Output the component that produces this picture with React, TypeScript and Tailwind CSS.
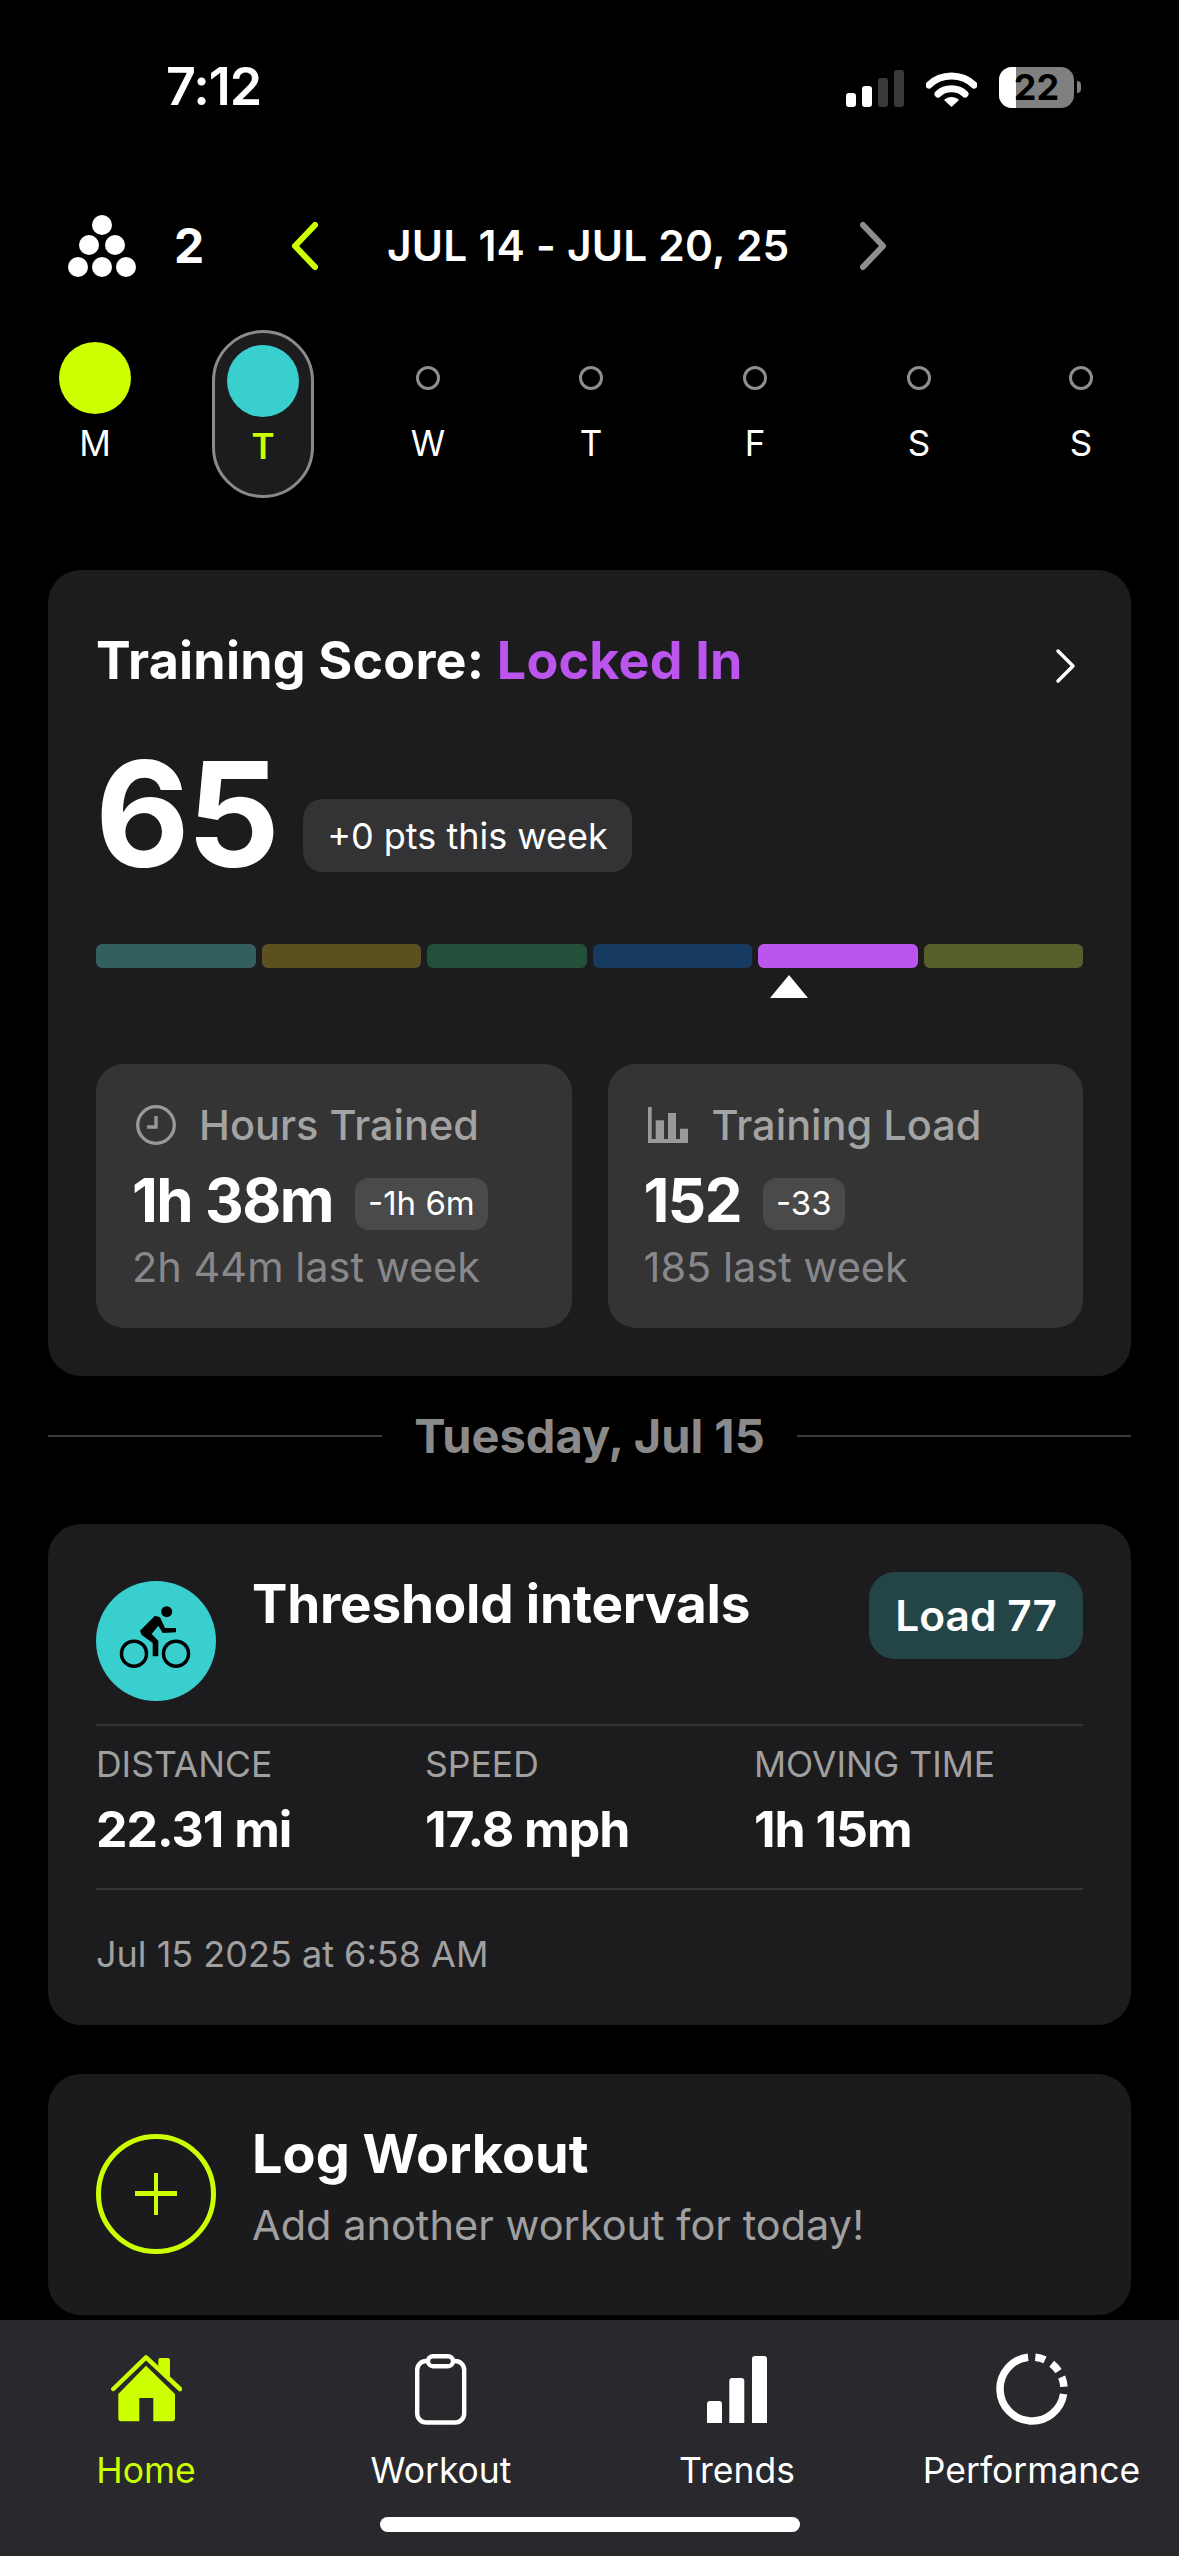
const lime = "#ccff00";

const DAYS = [
  { label: "M", state: "done" },
  { label: "T", state: "today" },
  { label: "W", state: "empty" },
  { label: "T", state: "empty" },
  { label: "F", state: "empty" },
  { label: "S", state: "empty" },
  { label: "S", state: "empty" },
];

const StatusBar = () => {
  return (
    <div className="flex h-[174px] items-center pl-[166px] pr-[98px]">
      <p className="text-[52px] leading-none font-semibold tracking-[-1px] text-white">7:12</p>
      <div className="ml-auto flex items-center">
        <svg width="58" height="37" viewBox="0 0 58 37" className="mt-[2px]">
          <rect x="0" y="23" width="10" height="14" rx="3" fill="#fff" />
          <rect x="16" y="16" width="10" height="21" rx="3" fill="#fff" />
          <rect x="32" y="8" width="10" height="29" rx="3" fill="#3a3a3a" />
          <rect x="48" y="0" width="10" height="37" rx="3" fill="#3a3a3a" />
        </svg>
        <svg width="51" height="37" viewBox="0 0 51 37" className="mt-[2px] ml-[22px]">
          <path d="M3 15 C15 3 36 3 48 15" fill="none" stroke="#fff" strokeWidth="7" strokeLinecap="round" />
          <path d="M12 24 C19 17 32 17 39 24" fill="none" stroke="#fff" strokeWidth="7" strokeLinecap="round" />
          <path d="M18 30 C22 26 29 26 33 30 L25.5 37 Z" fill="#fff" />
        </svg>
        <div className="relative ml-[22px] flex h-[41px] w-[75px] items-center justify-center overflow-hidden rounded-[13px] bg-[#808080]">
          <div className="absolute top-0 bottom-0 left-0 w-[17px] bg-white" />
          <span className="relative text-[36px] leading-none font-bold text-black">22</span>
        </div>
        <div className="ml-[3px] h-[12px] w-[4px] rounded-r-full bg-[#808080]" />
      </div>
    </div>
  );
};

const WeekHeader = () => {
  return (
    <div className="flex h-[144px] items-center">
      <svg width="68" height="63" viewBox="0 0 68 63" className="ml-[68px]" fill="#fff">
        <circle cx="34" cy="10" r="10" />
        <circle cx="21" cy="30" r="10" />
        <circle cx="47" cy="30" r="10" />
        <circle cx="10" cy="52" r="10" />
        <circle cx="34" cy="52" r="10" />
        <circle cx="58" cy="52" r="10" />
      </svg>
      <p className="ml-[38px] w-[117px] text-[48px] font-bold text-white">2</p>
      <svg width="30" height="50" viewBox="0 0 30 50" className="-ml-[1px]">
        <path d="M25 4 L5 25 L25 46" fill="none" stroke={lime} strokeWidth="6" strokeLinecap="round" strokeLinejoin="round" />
      </svg>
      <p className="ml-[67px] w-[471px] text-[42.5px] font-semibold tracking-[0.2px] whitespace-nowrap text-white">
        JUL 14 - JUL 20, 25
      </p>
      <svg width="30" height="50" viewBox="0 0 30 50">
        <path d="M5 4 L25 25 L5 46" fill="none" stroke="#8e8e8e" strokeWidth="6" strokeLinecap="round" strokeLinejoin="round" />
      </svg>
    </div>
  );
};

type DayProps = { label: string; state: string };
const Day = ({ label, state }: DayProps) => {
  if (state === "today") {
    return (
      <div className="flex h-[168px] w-[102px] flex-col items-center self-center rounded-full border-[3px] border-[#8a8a8a] bg-[#1c1c1e] pt-[12px]">
        <div className="h-[72px] w-[72px] rounded-full bg-[#3acfcf]" />
        <p className="mt-[11px] text-[35px] leading-[36px] font-semibold text-[#ccff00]">{label}</p>
      </div>
    );
  }
  return (
    <div className="flex flex-col items-center pt-[12px]">
      <div className="flex h-[72px] items-center">
        {state === "done" ? (
          <div className="h-[72px] w-[72px] rounded-full bg-[#ccff00]" />
        ) : (
          <div className="h-[24px] w-[24px] rounded-full border-[3px] border-[#8e8e8e]" />
        )}
      </div>
      <p className="mt-[11px] text-[35px] leading-[36px] text-white">{label}</p>
    </div>
  );
};

const BARS = ["#33605f", "#5c5020", "#22503a", "#163a60", "#bb55ee", "#565f2c"];

type StatProps = {
  icon: React.ReactNode;
  title: string;
  value: string;
  delta: string;
  last: string;
};
const StatBox = ({ icon, title, value, delta, last }: StatProps) => {
  return (
    <div className="h-[264px] rounded-[28px] bg-[#343434] px-[36px] pt-[36px]">
      <div className="flex h-[50px] items-center">
        {icon}
        <p className="text-[41.5px] font-medium whitespace-nowrap text-[#a3a3a3]">{title}</p>
      </div>
      <div className="mt-[28px] flex h-[52px] items-center">
        <p className="-mt-[8px] text-[60px] leading-none font-bold tracking-[-1.5px] whitespace-nowrap text-white">{value}</p>
        <span className="ml-[22px] flex h-[52px] items-center rounded-[14px] bg-[#4a4a4a] px-[13px] text-[33px] whitespace-nowrap text-white">
          {delta}
        </span>
      </div>
      <p className="mt-[15px] text-[41.5px] leading-[44px] whitespace-nowrap text-[#88888c]">{last}</p>
    </div>
  );
};

const ScoreCard = () => {
  return (
    <div className="mx-[48px] mt-[72px] rounded-[33px] bg-[#1c1c1e] px-[48px] pt-[60px] pb-[48px]">
      <div className="flex h-[60px] items-center">
        <p className="mt-[2px] text-[52px] font-bold tracking-[0.2px] whitespace-nowrap text-white">
          Training Score: <span className="text-[#bb55ee]">Locked In</span>
        </p>
        <svg width="22" height="36" viewBox="0 0 22 36" className="mt-[11px] mr-[6px] ml-auto">
          <path d="M3 3 L18 18 L3 33" fill="none" stroke="#fff" strokeWidth="3.5" strokeLinecap="round" strokeLinejoin="round" />
        </svg>
      </div>
      <div className="mt-[48px] flex items-start">
        <p className="mt-[3px] -ml-[1px] text-[146px] leading-none font-bold tracking-[-3px] text-white">65</p>
        <span className="mt-[61px] ml-[26px] flex h-[73px] items-center rounded-[20px] bg-[#333336] px-[24px] text-[36px] whitespace-nowrap text-white">
          +0 pts this week
        </span>
      </div>
      <div className="-mt-[3px] pt-[60px]">
        <div className="flex gap-[6px]">
          {BARS.map((color) => (
            <div key={color} className="h-[24px] flex-1 rounded-[6px]" style={{ backgroundColor: color }} />
          ))}
        </div>
      </div>
      <svg width="38" height="23" viewBox="0 0 38 23" className="mt-[7px] ml-[674px]">
        <path d="M19 0 L38 23 L0 23 Z" fill="#fff" />
      </svg>
      <div className="mt-[66px] grid grid-cols-2 gap-[36px]">
        <StatBox
          icon={
            <svg width="40" height="40" viewBox="0 0 40 40" className="mr-[23px] ml-[4px]" fill="none" stroke="#999" strokeWidth="3.3">
              <circle cx="20" cy="20" r="18.3" />
              <path d="M20 11 V22 H11" />
            </svg>
          }
          title="Hours Trained"
          value="1h 38m"
          delta="-1h 6m"
          last="2h 44m last week"
        />
        <StatBox
          icon={
            <svg width="40" height="36" viewBox="0 0 40 36" className="mr-[24px] ml-[4px]" fill="#999">
              <rect x="0" y="0" width="3.7" height="36" />
              <rect x="0" y="32" width="40" height="4" />
              <rect x="7.7" y="13.3" width="8.3" height="20" />
              <rect x="20" y="6" width="8" height="27" />
              <rect x="32" y="21.7" width="8" height="12" />
            </svg>
          }
          title="Training Load"
          value="152"
          delta="-33"
          last="185 last week"
        />
      </div>
    </div>
  );
};

const DateDivider = () => {
  return (
    <div className="mx-[48px] mt-[30px] flex h-[60px] items-center">
      <div className="h-[2px] flex-1 bg-[#3a3a3a]" />
      <p className="mx-[32px] text-[47px] font-bold whitespace-nowrap text-[#8a8a8a]">Tuesday, Jul 15</p>
      <div className="h-[2px] flex-1 bg-[#3a3a3a]" />
    </div>
  );
};

type MetricProps = { label: string; value: string };
const Metric = ({ label, value }: MetricProps) => {
  return (
    <div>
      <p className="text-[35.5px] leading-[40px] whitespace-nowrap text-[#a0a0a0]">{label}</p>
      <p className="mt-[16px] text-[50px] leading-[56px] font-bold tracking-[-1px] whitespace-nowrap text-white">{value}</p>
    </div>
  );
};

const WorkoutCard = () => {
  return (
    <div className="mx-[48px] mt-[58px] rounded-[33px] bg-[#1c1c1e] px-[48px] pt-[48px] pb-[49px]">
      <div className="flex items-start">
        <div className="mt-[9px] h-[120px] w-[120px] rounded-full bg-[#3acfcf]">
          <svg width="120" height="120" viewBox="0 0 120 120">
            <circle cx="70.7" cy="30.7" r="5.5" />
            <circle cx="38" cy="72.7" r="12.5" fill="none" stroke="#000" strokeWidth="3.5" />
            <circle cx="80" cy="72.7" r="12.5" fill="none" stroke="#000" strokeWidth="3.5" />
            <path d="M44 49.7 L59 34.7 L64 36.3 L69 47 L80 47 L80 51.3 L66.7 52 L62.3 44.7 L55.7 53 L62.3 59.7 L62.3 75.3 L56.7 75.3 L56.7 62 L45.7 54 Z" />
          </svg>
        </div>
        <p className="mt-[2px] ml-[36px] text-[53px] leading-[60px] font-bold tracking-[-0.2px] whitespace-nowrap text-white">Threshold intervals</p>
        <span className="ml-auto flex h-[87px] items-center rounded-[26px] bg-[#234547] px-[26px] text-[42.5px] font-semibold whitespace-nowrap text-white">
          Load 77
        </span>
      </div>
      <div className="mt-[23px] h-[2px] bg-[#343436]" />
      <div className="mt-[19px] grid grid-cols-[329px_329px_1fr]">
        <Metric label="DISTANCE" value="22.31 mi" />
        <Metric label="SPEED" value="17.8 mph" />
        <Metric label="MOVING TIME" value="1h 15m" />
      </div>
      <div className="mt-[31px] h-[2px] bg-[#343436]" />
      <p className="mt-[42px] text-[36px] leading-[44px] text-[#a0a0a0]">Jul 15 2025 at 6:58 AM</p>
    </div>
  );
};

const LogCard = () => {
  return (
    <div className="mx-[48px] mt-[49px] flex rounded-[33px] bg-[#1b1b1d] px-[48px] pt-[50px] pb-[61px]">
      <div className="mt-[10px] flex h-[120px] w-[120px] items-center justify-center rounded-full border-[5px] border-[#ccff00]">
        <svg width="42" height="42" viewBox="0 0 42 42" fill="#ccff00">
          <rect x="19" y="0" width="4" height="42" />
          <rect x="0" y="18" width="42" height="5" />
        </svg>
      </div>
      <div className="ml-[36px]">
        <p className="text-[54px] leading-[60px] font-bold text-white">Log Workout</p>
        <p className="mt-[19px] text-[41.5px] leading-[44px] whitespace-nowrap text-[#a0a0a0]">Add another workout for today!</p>
      </div>
    </div>
  );
};

const HomeIcon = () => (
  <svg width="72" height="70" viewBox="0 0 72 70" fill={lime}>
    <path d="M48.3 12 V6 Q48.3 4 50.3 4 H58 Q60 4 60 6 V24 Z" />
    <path d="M3.3 35 L36 3.3 L70 35" fill="none" stroke={lime} strokeWidth="4.5" strokeLinecap="round" strokeLinejoin="round" />
    <path d="M8.3 40 L36 11.7 L65 40 V64 Q65 67.3 62 67.3 H43.3 V44 H29.3 V67.3 H11 Q8.3 67.3 8.3 64 Z" />
  </svg>
);

const WorkoutIcon = () => (
  <svg width="52" height="71" viewBox="0 0 52 71" fill="none" stroke="#fff" strokeWidth="4.4">
    <rect x="2.2" y="7" width="47" height="61.5" rx="9" />
    <rect x="13" y="2.2" width="25" height="10" rx="5" fill="#28282d" />
  </svg>
);

const TrendsIcon = () => (
  <svg width="60" height="67" viewBox="0 0 60 67" fill="#fff">
    <path d="M0 67 V48 Q0 45 3 45 H12 Q15 45 15 48 V67 Z" />
    <path d="M22.3 67 V25 Q22.3 22 25.3 22 H34.3 Q37.3 22 37.3 25 V67 Z" />
    <path d="M45 67 V3 Q45 0 48 0 H57 Q60 0 60 3 V67 Z" />
  </svg>
);

const PerformanceIcon = () => (
  <svg width="72" height="72" viewBox="0 0 72 72" fill="none" stroke="#fff" strokeWidth="7.5">
    <path d="M67.6 41 A32 32 0 1 1 32.1 4.2" />
    <path d="M39.3 4.2 A32 32 0 0 1 49 6.8" />
    <path d="M55.7 10.8 A32 32 0 0 1 62.5 18.1" />
    <path d="M65.7 24 A32 32 0 0 1 67.9 33.8" />
  </svg>
);

const TABS = [
  { label: "Home", icon: <HomeIcon />, active: true },
  { label: "Workout", icon: <WorkoutIcon />, active: false },
  { label: "Trends", icon: <TrendsIcon />, active: false },
  { label: "Performance", icon: <PerformanceIcon />, active: false },
];

const TabBar = () => {
  return (
    <div className="mt-[5px] flex-1 bg-[#28282d] pt-[33px]">
      <div className="grid grid-cols-[292px_298px_294px_295px]">
        {TABS.map((tab) => (
          <div key={tab.label} className="flex flex-col items-center">
            <div className="flex h-[72px] items-center">{tab.icon}</div>
            <p className={tab.active ? "mt-[26px] text-[35.5px] leading-[40px] text-[#ccff00]" : "mt-[26px] text-[35.5px] leading-[40px] text-white"}>
              {tab.label}
            </p>
          </div>
        ))}
      </div>
      <div className="mx-auto mt-[26px] h-[15px] w-[420px] rounded-full bg-white" />
    </div>
  );
};

const App = () => {
  return (
    <div className="flex h-[2556px] w-[1179px] flex-col overflow-hidden bg-black font-['Inter',sans-serif]">
      <StatusBar />
      <WeekHeader />
      <div className="mt-[12px] grid h-[168px] grid-cols-[168px_168px_162px_164px_164px_164px_160px] justify-items-center pl-[11px]">
        {DAYS.map((day, i) => (
          <Day key={i} label={day.label} state={day.state} />
        ))}
      </div>
      <ScoreCard />
      <DateDivider />
      <WorkoutCard />
      <LogCard />
      <TabBar />
    </div>
  );
};

export default App;
